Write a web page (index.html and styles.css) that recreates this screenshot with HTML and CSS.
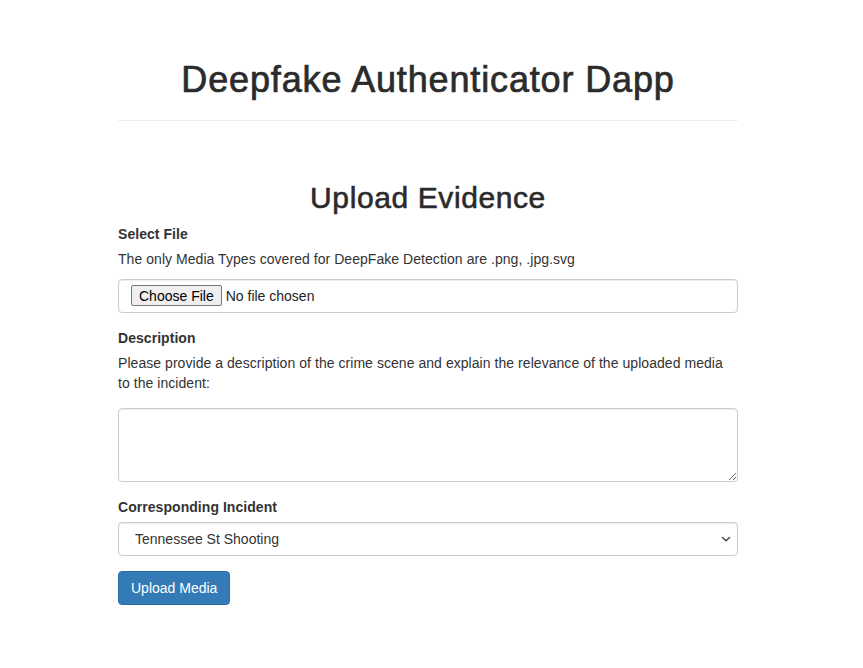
FILE: index.html
```html
<!DOCTYPE html>
<html lang="en">
<head>
<meta charset="utf-8">
<title>Deepfake Authenticator Dapp</title>
<link rel="stylesheet" href="styles.css">
</head>
<body>
<div class="container">
  <header class="page-header">
    <h1>Deepfake Authenticator Dapp</h1>
  </header>
  <hr class="divider">
  <section class="upload">
    <h2>Upload Evidence</h2>
    <form class="upload-form">
      <div class="form-group">
        <label for="file">Select File</label>
        <p class="help">The only Media Types covered for DeepFake Detection are .png, .jpg.svg</p>
        <div class="form-control file-control">
          <input id="file" type="file" class="file-input">
        </div>
      </div>
      <div class="form-group">
        <label for="desc">Description</label>
        <p class="help help-lead">Please provide a description of the crime scene and explain the relevance of the uploaded media to the incident:</p>
        <textarea id="desc" class="form-control textarea" rows="3"></textarea>
      </div>
      <div class="form-group">
        <label for="incident">Corresponding Incident</label>
        <div class="select-wrap">
          <select id="incident" class="form-control select">
            <option>Tennessee St Shooting</option>
          </select>
          <svg class="chevron" width="10" height="7" viewBox="0 0 10 7" aria-hidden="true"><path d="M1.5 1.5 L5 4.8 L8.5 1.5" fill="none" stroke="#444" stroke-width="1.5" stroke-linecap="round" stroke-linejoin="round"/></svg>
        </div>
      </div>
      <button type="button" class="btn-primary">Upload Media</button>
    </form>
  </section>
</div>
</body>
</html>
```

FILE: styles.css
```css
* { box-sizing: border-box; }
html, body { margin: 0; padding: 0; background: #fff; }
body {
  font-family: "Liberation Sans", Arial, Helvetica, sans-serif;
  font-size: 14px;
  line-height: 20px;
  color: #333;
  letter-spacing: 0.05px;
  padding-right: 7px;
}
.container {
  width: 620px;
  margin: 0 auto;
  padding-top: 40px;
}
.page-header h1 {
  margin: 20px 0 10px;
  font-size: 36px;
  line-height: 39.6px;
  font-weight: 400;
  letter-spacing: 0.85px;
  -webkit-text-stroke: 0.7px #2b2b2b;
  text-align: center;
  color: #2b2b2b;
}
.divider {
  margin: 20px 0;
  border: 0;
  border-top: 1px solid #eee;
  height: 0;
}
.upload {
  padding-top: 40px;
}
.upload h2 {
  margin: 0 0 10px;
  font-size: 30px;
  line-height: 33px;
  font-weight: 400;
  letter-spacing: 0.6px;
  -webkit-text-stroke: 0.6px #2b2b2b;
  text-align: center;
  color: #2b2b2b;
}
.form-group { margin-bottom: 15px; }
label {
  display: inline-block;
  font-weight: 700;
  margin-bottom: 5px;
}
.help { margin: 0 0 10px; }
.help-lead { margin-bottom: 15px; }
.form-control {
  display: block;
  width: 100%;
  height: 34px;
  padding: 6px 12px;
  font-family: inherit;
  font-size: 14px;
  line-height: 20px;
  color: #555;
  background: #fff;
  border: 1px solid #ccc;
  border-radius: 4px;
  box-shadow: inset 0 1px 1px rgba(0,0,0,.075);
}
.file-control {
  padding: 6px 12px;
  display: flex;
  align-items: center;
}
.file-input {
  font-family: inherit;
  font-size: 14px;
  color: #222;
  margin: 0;
  padding: 0;
  height: 21px;
}
.file-input::file-selector-button {
  font-family: inherit;
  font-size: 14px;
  height: 21px;
  padding: 0 7px;
  margin: 0 4px 0 0;
  background: #efefef;
  border: 1px solid #767676;
  border-radius: 2px;
  color: #000;
}
.textarea {
  height: 74px;
  resize: vertical;
  margin: 0;
}
.select-wrap { position: relative; }
.select {
  -webkit-appearance: none;
  appearance: none;
  padding: 6px 30px 6px 16px;
  color: #333;
}
.chevron {
  position: absolute;
  right: 7px;
  top: 14px;
  pointer-events: none;
}
.btn-primary {
  display: inline-block;
  font-family: inherit;
  font-size: 14px;
  line-height: 20px;
  padding: 6px 12px;
  color: #fff;
  background: #337ab7;
  border: 1px solid #2e6da4;
  border-radius: 4px;
  cursor: pointer;
}
```
